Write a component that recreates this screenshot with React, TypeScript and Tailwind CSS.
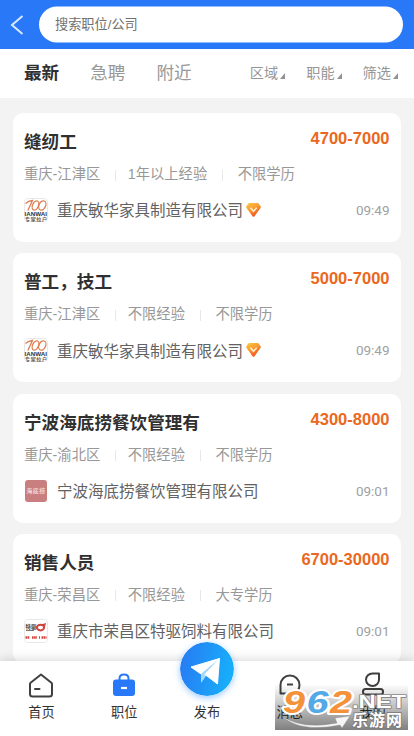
import type { ReactNode } from 'react';

type LogoKind = 'manwah' | 'haidilao' | 'tequ';

interface Job {
  title: string;
  salary: string;
  tags: string[];
  company: string;
  logo: LogoKind;
  vip?: boolean;
  time: string;
}

const jobs: Job[] = [
  {
    title: '缝纫工',
    salary: '4700-7000',
    tags: ['重庆-江津区', '1年以上经验', '不限学历'],
    company: '重庆敏华家具制造有限公司',
    logo: 'manwah',
    vip: true,
    time: '09:49',
  },
  {
    title: '普工，技工',
    salary: '5000-7000',
    tags: ['重庆-江津区', '不限经验', '不限学历'],
    company: '重庆敏华家具制造有限公司',
    logo: 'manwah',
    vip: true,
    time: '09:49',
  },
  {
    title: '宁波海底捞餐饮管理有',
    salary: '4300-8000',
    tags: ['重庆-渝北区', '不限经验', '不限学历'],
    company: '宁波海底捞餐饮管理有限公司',
    logo: 'haidilao',
    time: '09:01',
  },
  {
    title: '销售人员',
    salary: '6700-30000',
    tags: ['重庆-荣昌区', '不限经验', '大专学历'],
    company: '重庆市荣昌区特驱饲料有限公司',
    logo: 'tequ',
    time: '09:01',
  },
];

function CompanyLogo({ kind }: { kind: LogoKind }) {
  return (
    <svg viewBox="0 0 24 24" className="h-6 w-6 shrink-0 rounded">
      {kind === 'manwah' && (
        <>
          <rect x=".5" y=".5" width="23" height="23" rx="3" fill="#fff" stroke="#e8e8e8" />
          <g fill="none" stroke="#dd7d52" strokeWidth="1.3">
            <path d="M1.500 5.500Q4.500 2.800 8.500 2.500L3.800 12.500" />
            <ellipse cx="11.500" cy="7.500" rx="2.900" ry="4.900" transform="rotate(24 11.500 7.500)" />
            <ellipse cx="18.300" cy="7.500" rx="3.300" ry="4.900" transform="rotate(24 18.300 7.500)" />
          </g>
          <text x="0.500" y="18.300" fontSize="5.800" fontWeight="700" fill="#333" textLength="22.500" lengthAdjust="spacingAndGlyphs">IANWAI</text>
          <text x="1" y="23.300" fontSize="5" fontWeight="700" fill="#555" textLength="22">专家拉户</text>
        </>
      )}
      {kind === 'haidilao' && (
        <>
          <rect x="1" y="1" width="22" height="22" rx="3" fill="#c97f80" />
          <text x="2.500" y="13.500" fontSize="5.800" fontWeight="700" fill="#f3dada" textLength="18.500">海底捞</text>
        </>
      )}
      {kind === 'tequ' && (
        <>
          <rect x=".5" y=".5" width="23" height="23" rx="3" fill="#fff" stroke="#e8e8e8" />
          <text x="1.500" y="9.600" fontSize="5.400" fontWeight="700" fill="#444">特驱</text>
          <path d="M2 11.500h8" stroke="#777" strokeWidth="1" />
          <ellipse cx="16.500" cy="8.600" rx="3.600" ry="2.800" fill="none" stroke="#d4453f" strokeWidth="2" />
          <path d="M17 5.500l5-1.500-1 4" fill="#d4453f" />
          <path d="M1.500 18.500h4M8 18.500h5M15 18.500h1M17.500 18.500h5" stroke="#d4453f" strokeWidth="2.400" strokeDasharray="1.700 .4" />
        </>
      )}
    </svg>
  );
}

function VipBadge() {
  return (
    <svg viewBox="0 0 15 14" className="ml-[2.5px] h-[14px] w-[15px]">
      <defs>
        <linearGradient id="vip" x1="0" y1="0" x2=".6" y2="1">
          <stop offset="0" stopColor="#fbc943" />
          <stop offset=".5" stopColor="#f99c31" />
          <stop offset="1" stopColor="#ee4c20" />
        </linearGradient>
      </defs>
      <path d="M3.500 0h8q.7 0 1.200.6l1.900 2.700q.6.900-.1 1.700l-6 8.200q-1 1-2 0L.5 5Q-.2 4.200.4 3.300L2.300.6Q2.800 0 3.500 0Z" fill="url(#vip)" />
      <path d="M4.500 4.800l3 3.400L10.700 4.800" fill="none" stroke="#fff0cd" strokeWidth="1.600" />
    </svg>
  );
}

function JobCard({ job }: { job: Job }) {
  return (
    <article className="h-[129px] shrink-0 rounded-[10px] bg-white pt-4 pr-[11.5px] pl-[11px]">
      <div className="flex h-[27px] items-start justify-between">
        <h2 className="text-[17.6px] leading-[27px] font-bold text-[#303030]">{job.title}</h2>
        <span className="-mt-px font-['Liberation_Sans'] text-[16.5px] leading-[21px] font-bold text-[#ea6820]">{job.salary}</span>
      </div>
      <div className="mt-2 flex h-5 items-center text-[14.3px] leading-5 text-[#989898]">
        {job.tags.map((tag, i) => (
          <div key={tag} className="flex items-center">
            {i > 0 && (
              <span className={`ml-[15px] h-[11px] w-px translate-y-px bg-[#e8e8e8] ${i === 1 ? 'mr-[11.5px]' : 'mr-[14.5px]'}`} />
            )}
            <span>{tag}</span>
          </div>
        ))}
      </div>
      <div className="mt-[14px] flex h-6 items-center">
        <CompanyLogo kind={job.logo} />
        <span className="ml-[9px] translate-y-[0.5px] text-[15.5px] text-[#626262]">{job.company}</span>
        {job.vip && <VipBadge />}
        <span className="ml-auto font-['Roboto'] text-[13.5px] leading-5 text-[#a0a0a0]">{job.time}</span>
      </div>
    </article>
  );
}

function NavItem({ label, children }: { label: string; children: ReactNode }) {
  return (
    <div className="flex flex-1 flex-col items-center pt-3 text-[13.2px] leading-[18px] text-[#333]">
      <div className="h-[31px]">{children}</div>
      <span>{label}</span>
    </div>
  );
}

function Watermark() {
  return (
    <div className="absolute top-[23px] left-[275px] h-[46px] w-[133px] bg-linear-to-b from-transparent to-black/50">
      <svg viewBox="0 0 133 46" className="h-full w-full overflow-visible">
        <path d="M7 32Q27 46 62 39L60 34 75 32 67 44 65 41Q25 49 7 32Z" fill="#fff" fillOpacity=".9" stroke="#888" strokeWidth=".4" />
        <g fontFamily="Liberation Sans" fontWeight="700" strokeLinejoin="round">
          {/* white halo first, coloured digits on top */}
          <g fontSize="31" fontStyle="italic" stroke="#fff" strokeWidth="4" paintOrder="stroke">
            <text x="8" y="28.500" fill="#f3923b" textLength="22" lengthAdjust="spacingAndGlyphs">9</text>
            <text x="31.500" y="28.500" fill="#52a9e5" textLength="22" lengthAdjust="spacingAndGlyphs">6</text>
            <text x="55" y="28.500" fill="#f3923b" textLength="22" lengthAdjust="spacingAndGlyphs">2</text>
          </g>
          <text x="77" y="24" fontSize="19" fill="#fff" stroke="#888" strokeWidth="1.600" paintOrder="stroke" textLength="54" lengthAdjust="spacingAndGlyphs">.NET</text>
        </g>
        <text x="77" y="41.500" fontSize="16" fontWeight="700" fill="#fff" stroke="#777" strokeWidth="1.400" paintOrder="stroke" textLength="50">乐游网</text>
      </svg>
    </div>
  );
}

export default function App() {
  return (
    <div className="flex h-[736px] w-[414px] flex-col overflow-hidden bg-[#f3f3f3] font-['Liberation_Sans','Noto_Sans_CJK_SC',sans-serif]">
      <header className="flex h-[49px] shrink-0 items-center bg-[#2878f8] pr-[11px] pl-[10px]">
        <svg viewBox="0 0 14 20" className="h-5 w-[14px]" fill="none" stroke="#d9e8ff" strokeWidth="2">
          <path d="M12.500 1L2 10l10.500 9" />
        </svg>
        <div className="ml-[15px] flex h-9 flex-1 -translate-y-[0.5px] items-center rounded-full bg-white pl-4 text-[13.2px] text-[#707070]">
          搜索职位/公司
        </div>
      </header>

      <div className="flex h-[49px] shrink-0 items-center justify-between bg-white pr-4 pl-6">
        <div className="flex gap-[31px] text-[17.6px] text-[#989898]">
          <span className="font-bold text-[#303030]">最新</span>
          <span>急聘</span>
          <span>附近</span>
        </div>
        <div className="flex gap-[21px] text-[14.2px] text-[#969696]">
          {['区域', '职能', '筛选'].map((label) => (
            <span key={label} className="flex items-center">
              {label}
              <svg viewBox="0 0 5 6" className="mt-[5px] ml-[2px] h-[6px] w-[5px]" fill="#929292">
                <path d="M5 0v6H0z" />
              </svg>
            </span>
          ))}
        </div>
      </div>

      <main className="flex min-h-0 flex-1 flex-col gap-[11.3px] overflow-hidden px-[13px] pt-[15px]">
        {jobs.map((job) => (
          <JobCard key={job.title} job={job} />
        ))}
      </main>

      <nav className="relative flex h-[75px] shrink-0 bg-white shadow-[0_-1px_10px_rgba(0,0,0,0.16)]">
        <NavItem label="首页">
          <svg viewBox="0 0 26 26" className="h-[26px] w-[26px]" fill="none" stroke="#404040" strokeWidth="2" strokeLinejoin="round" strokeLinecap="round">
            <path d="M13 1.500L2.600 9.800q-.6.600-.6 1.300V21q0 2.500 2.500 2.500h17q2.500 0 2.500-2.500V11.100q0-.7-.6-1.300Z" />
            <path d="M7 16h4.500" />
          </svg>
        </NavItem>
        <NavItem label="职位">
          <svg viewBox="0 0 26 26" className="h-[26px] w-[26px]">
            <path d="M8.500 8V5.500q0-4 4.500-4t4.500 4V8" fill="none" stroke="#2878f8" strokeWidth="2" />
            <rect x="2" y="6.500" width="22" height="16.500" rx="3" fill="#2878f8" />
            <path d="M10 15h6" stroke="#fff" strokeWidth="2.200" />
          </svg>
        </NavItem>
        <NavItem label="发布">
          <svg viewBox="0 0 54 54" className="-mt-[31px] h-[54px] w-[54px] rounded-full shadow-[0_2px_6px_rgba(40,140,250,0.45)]">
            <defs>
              <linearGradient id="send" x1="0" y1="0" x2="1" y2=".2">
                <stop offset="0" stopColor="#2878f3" />
                <stop offset="1" stopColor="#18adfa" />
              </linearGradient>
            </defs>
            <circle cx="27" cy="27" r="27" fill="url(#send)" />
            <path d="M11 25L39.500 16.500 21 32Z" fill="#fff" stroke="#fff" strokeLinejoin="round" />
            <path d="M21 32L39.500 16.500 26 34 21 41Z" fill="#a7d8fb" />
            <path d="M25 32.500L39.500 16.500 37.500 42Z" fill="#fff" stroke="#fff" strokeLinejoin="round" />
          </svg>
        </NavItem>
        <NavItem label="消息">
          <svg viewBox="0 0 26 26" className="h-[26px] w-[26px]" fill="none" stroke="#404040" strokeWidth="2" strokeLinejoin="round">
            <path d="M3.500 20.500V12a9.500 9.500 0 0 1 19 0q0 8.500-9.500 8.500Z" />
            <path d="M10 11.500h6" />
          </svg>
        </NavItem>
        <NavItem label="我的">
          <svg viewBox="0 0 26 26" className="h-[26px] w-[26px] overflow-visible" fill="none" stroke="#404040" strokeWidth="2" strokeLinejoin="round">
            <path d="M12.500.5h6.500V6.500a6.500 6.200 0 1 1-6.500-6Z" />
            <rect x="3" y="16" width="20" height="5.500" rx="2.500" />
          </svg>
        </NavItem>
        <Watermark />
      </nav>
    </div>
  );
}
